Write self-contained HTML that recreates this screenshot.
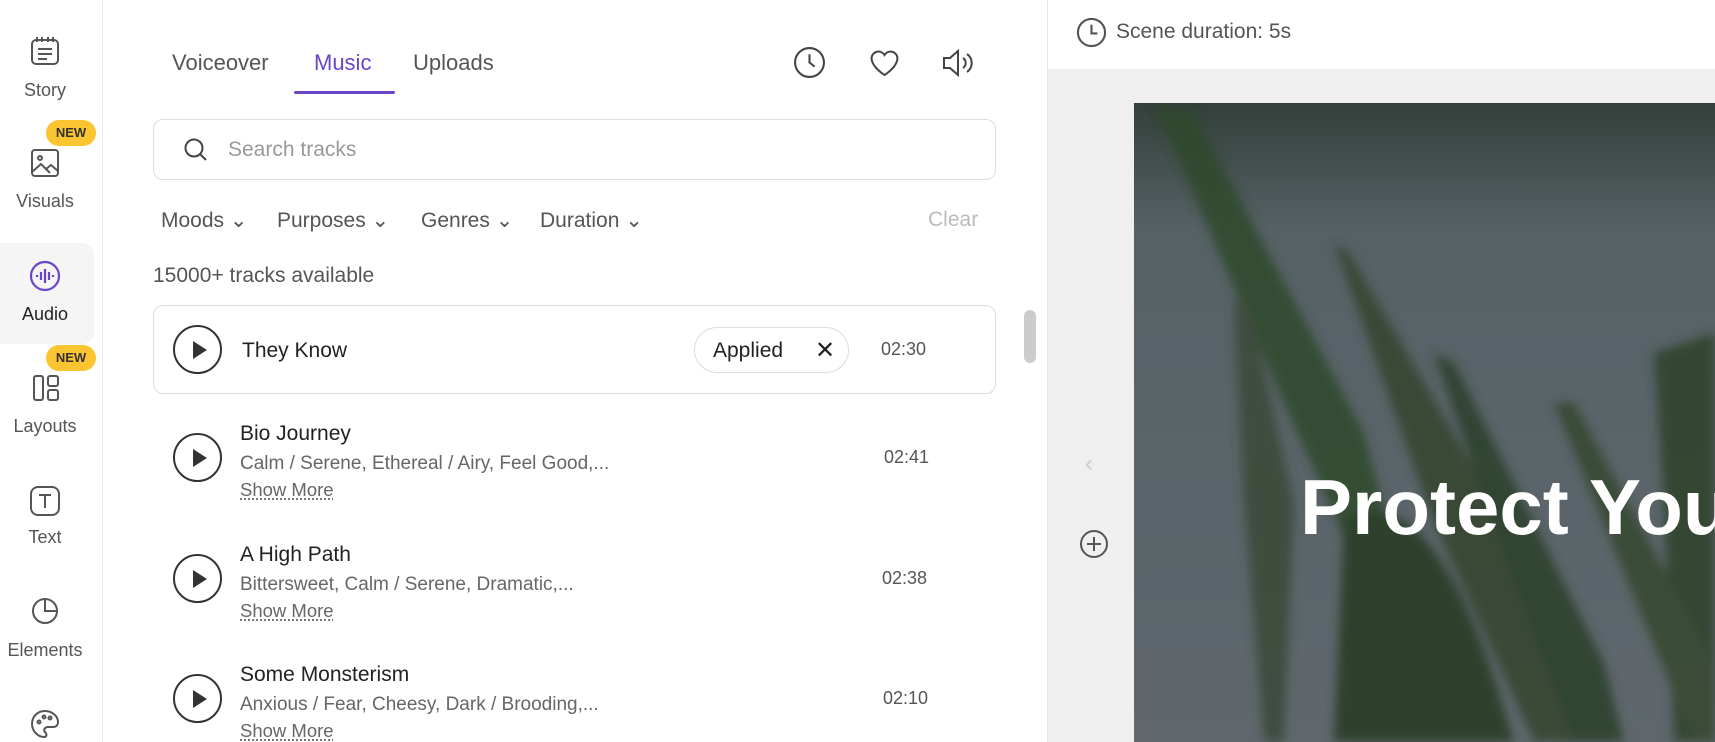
<!DOCTYPE html>
<html><head><meta charset="utf-8"><style>
*{box-sizing:border-box;margin:0;padding:0}
body{width:1715px;height:742px;overflow:hidden;background:#fff;font-family:"Liberation Sans",sans-serif;position:relative;color:#333}
.abs{position:absolute}
.side{left:0;top:0;width:103px;height:742px;border-right:1px solid #ececec;background:#fff}
.si{position:absolute;left:0;width:90px;text-align:center;font-size:18px;color:#555}
.new{position:absolute;left:46px;width:50px;height:26px;border-radius:13px;background:#fbc531;color:#333;font-size:13px;font-weight:bold;text-align:center;line-height:26px}
.tab{top:50px;font-size:22px;color:#555}
.sub{position:absolute;left:240px;font-size:19px;color:#666}
.sm{position:absolute;left:240px;font-size:18.5px;color:#666;text-decoration:underline dotted;text-underline-offset:3px}
.tm{position:absolute;font-size:18px;color:#555}
.play{position:absolute;left:173px;width:49px;height:49px;border:2px solid #333;border-radius:50%}
.play:after{content:"";position:absolute;left:18px;top:14px;border-left:14px solid #333;border-top:9px solid transparent;border-bottom:9px solid transparent}
.flt{top:208px;font-size:21px;color:#555}
</style></head><body>
<div class="abs side">
 <svg class="abs" style="left:29px;top:35px" width="32" height="32" viewBox="0 0 32 32" fill="none" stroke="#555" stroke-width="2"><rect x="3" y="5" width="26" height="24" rx="4"/><path d="M8 2v5M13 2v5M19 2v5M24 2v5M9 14h14M9 19h14M9 24h9"/></svg>
 <div class="si" style="top:80px">Story</div>
 <div class="new" style="top:120px">NEW</div>
 <svg class="abs" style="left:30px;top:148px" width="30" height="30" viewBox="0 0 30 30" fill="none" stroke="#555" stroke-width="2"><rect x="2" y="2" width="26" height="26" rx="3"/><circle cx="10" cy="10" r="2"/><path d="M2 24l9-8 9 9M16 21l5-4 7 6"/></svg>
 <div class="si" style="top:191px">Visuals</div>
 <div class="abs" style="left:0;top:243px;width:94px;height:101px;background:#f5f5f5;border-radius:0 12px 12px 0"></div>
 <svg class="abs" style="left:29px;top:260px" width="32" height="32" viewBox="0 0 32 32" fill="none" stroke="#6a45c8" stroke-width="2.2"><circle cx="16" cy="16" r="14"/><path d="M8 15v2M12 12v8M16 9v14M20 12v8M24 15v2"/></svg>
 <div class="si" style="top:304px;color:#222">Audio</div>
 <div class="new" style="top:345px">NEW</div>
 <svg class="abs" style="left:32px;top:374px" width="28" height="28" viewBox="0 0 28 28" fill="none" stroke="#555" stroke-width="2"><rect x="2" y="2" width="9" height="24" rx="2"/><rect x="16" y="2" width="10" height="10" rx="2"/><rect x="16" y="16" width="10" height="10" rx="2"/></svg>
 <div class="si" style="top:416px">Layouts</div>
 <svg class="abs" style="left:29px;top:485px" width="32" height="32" viewBox="0 0 32 32" fill="none" stroke="#555" stroke-width="2"><rect x="2" y="2" width="28" height="28" rx="7"/><path d="M10 10h12M16 10v13"/></svg>
 <div class="si" style="top:527px">Text</div>
 <svg class="abs" style="left:30px;top:596px" width="30" height="30" viewBox="0 0 30 30" fill="none" stroke="#555" stroke-width="2"><circle cx="15" cy="15" r="12"/><path d="M15 3v12h12"/></svg>
 <div class="si" style="top:640px">Elements</div>
 <svg class="abs" style="left:29px;top:708px" width="32" height="32" viewBox="0 0 32 32" fill="none" stroke="#555" stroke-width="2"><path d="M16 3C8 3 3 9 3 16s6 13 12 13c3 0 3-3 1-5s0-5 3-5h5c4 0 5-3 5-5C29 8 23 3 16 3z"/><circle cx="10" cy="14" r="1.5"/><circle cx="15" cy="9" r="1.5"/><circle cx="21" cy="10" r="1.5"/></svg>
</div>

<div class="abs tab" style="left:172px">Voiceover</div>
<div class="abs tab" style="left:314px;color:#6a45c8">Music</div>
<div class="abs" style="left:294px;top:91px;width:101px;height:3px;background:#6a45c8;border-radius:2px"></div>
<div class="abs tab" style="left:413px">Uploads</div>
<svg class="abs" style="left:793px;top:46px" width="33" height="33" viewBox="0 0 32 32" fill="none" stroke="#444" stroke-width="2"><circle cx="16" cy="16" r="14"/><path d="M16 8v8l5 4"/></svg>
<svg class="abs" style="left:868px;top:48px" width="33" height="30" viewBox="0 0 32 30" fill="none" stroke="#444" stroke-width="2"><path d="M16 27S3 19 3 10a7 7 0 0 1 13-3 7 7 0 0 1 13 3c0 9-13 17-13 17z"/></svg>
<svg class="abs" style="left:941px;top:48px" width="36" height="30" viewBox="0 0 36 30" fill="none" stroke="#444" stroke-width="2"><path d="M3 10h6l8-7v24l-8-7H3z"/><path d="M22 10a6 6 0 0 1 0 10M26 6a11 11 0 0 1 0 18"/></svg>

<div class="abs" style="left:153px;top:119px;width:843px;height:61px;border:1.5px solid #ddd;border-radius:10px"></div>
<svg class="abs" style="left:183px;top:137px" width="26" height="26" viewBox="0 0 26 26" fill="none" stroke="#444" stroke-width="2"><circle cx="11" cy="11" r="8.5"/><path d="M17 17l6 6"/></svg>
<div class="abs" style="left:228px;top:138px;font-size:21px;color:#999">Search tracks</div>

<div class="abs flt" style="left:161px">Moods ⌄</div>
<div class="abs flt" style="left:277px">Purposes ⌄</div>
<div class="abs flt" style="left:421px">Genres ⌄</div>
<div class="abs flt" style="left:540px">Duration ⌄</div>
<div class="abs flt" style="left:928px;color:#bbb">Clear</div>
<div class="abs" style="left:153px;top:264px;font-size:21px;color:#555">15000+ tracks available</div>

<div class="abs" style="left:153px;top:305px;width:843px;height:89px;border:1.5px solid #ddd;border-radius:10px"></div>
<div class="play" style="top:325px"></div>
<div class="abs" style="left:242px;top:339px;font-size:21px;color:#222">They Know</div>
<div class="abs" style="left:694px;top:327px;width:155px;height:46px;border:1.5px solid #ddd;border-radius:23px;font-size:21px;color:#222;padding:11px 0 0 18px">Applied <span style="position:absolute;left:120px;top:8px;font-size:24px">✕</span></div>
<div class="tm" style="left:881px;top:339px">02:30</div>

<div class="play" style="top:433px"></div>
<div class="abs" style="left:240px;top:422px;font-size:21px;color:#222">Bio Journey</div>
<div class="sub" style="top:453px">Calm / Serene, Ethereal / Airy, Feel Good,...</div>
<div class="sm" style="top:479px">Show More</div>
<div class="tm" style="left:884px;top:447px">02:41</div>

<div class="play" style="top:554px"></div>
<div class="abs" style="left:240px;top:543px;font-size:21px;color:#222">A High Path</div>
<div class="sub" style="top:574px">Bittersweet, Calm / Serene, Dramatic,...</div>
<div class="sm" style="top:600px">Show More</div>
<div class="tm" style="left:882px;top:568px">02:38</div>

<div class="play" style="top:674px"></div>
<div class="abs" style="left:240px;top:663px;font-size:21px;color:#222">Some Monsterism</div>
<div class="sub" style="top:694px">Anxious / Fear, Cheesy, Dark / Brooding,...</div>
<div class="sm" style="top:720px">Show More</div>
<div class="tm" style="left:883px;top:688px">02:10</div>

<div class="abs" style="left:1024px;top:310px;width:12px;height:53px;background:#ccc;border-radius:6px"></div>

<div class="abs" style="left:1047px;top:0;width:668px;height:742px;background:#efefef;border-left:1px solid #e6e6e6"></div>
<div class="abs" style="left:1048px;top:0;width:667px;height:69px;background:#fff"></div>
<svg class="abs" style="left:1076px;top:17px" width="31" height="31" viewBox="0 0 32 32" fill="none" stroke="#555" stroke-width="2.2"><circle cx="16" cy="16" r="14"/><path d="M16 8v9h6"/></svg>
<div class="abs" style="left:1116px;top:20px;font-size:21px;color:#555">Scene duration: 5s</div>
<div class="abs" style="left:1085px;top:450px;font-size:24px;color:#ccc">‹</div>
<svg class="abs" style="left:1078px;top:528px" width="32" height="32" viewBox="0 0 32 32" fill="none" stroke="#555" stroke-width="2"><circle cx="16" cy="16" r="13"/><path d="M16 9v14M9 16h14"/></svg>

<svg class="abs" style="left:1134px;top:103px" width="581" height="639" viewBox="0 0 581 639">
<defs><linearGradient id="g" x1="0" y1="0" x2="0" y2="1"><stop offset="0" stop-color="#33403a"/><stop offset=".2" stop-color="#566166"/><stop offset="1" stop-color="#5f676d"/></linearGradient><filter id="b"><feGaussianBlur stdDeviation="5"/></filter></defs>
<rect width="581" height="639" fill="url(#g)"/>
<g filter="url(#b)" fill="#2f4a2c" opacity=".85">
<path d="M20 0 L60 10 L230 330 L280 520 L240 500 L150 300Z"/>
<path d="M200 140 L215 150 L360 400 L450 639 L400 639 L300 420Z" fill="#34452f"/>
<path d="M100 200 L115 200 L160 400 L150 639 L130 639 L110 400Z" fill="#3a4a38"/>
<path d="M300 250 L320 260 L470 560 L490 639 L440 639 L380 480Z" fill="#2c3f2a"/>
<path d="M210 420 Q300 360 380 639 L200 639Z" fill="#263a22"/>
<path d="M520 250 L581 230 L581 639 L540 639 L530 400Z" fill="#2f432c"/>
<path d="M420 300 L440 300 L581 560 L581 639 L560 639Z" fill="#34472f"/>
</g>
<text x="166" y="431" font-family="Liberation Sans,sans-serif" font-weight="bold" font-size="78" fill="#fff">Protect Your</text>
</svg>
</body></html>
